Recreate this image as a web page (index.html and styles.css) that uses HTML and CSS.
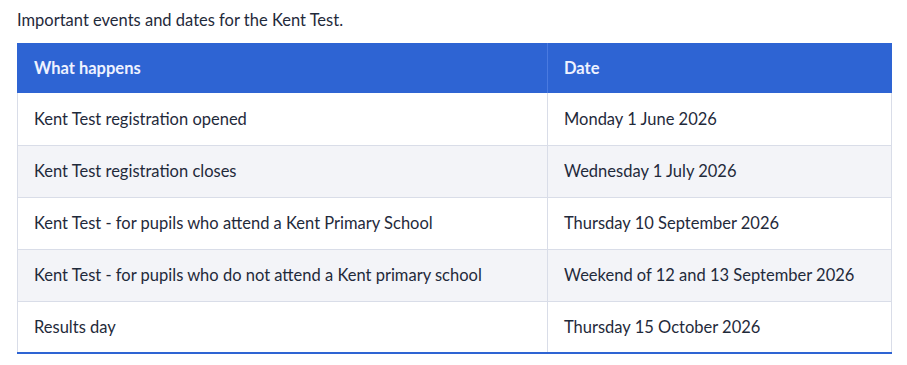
FILE: index.html
```html
<!DOCTYPE html>
<html lang="en">
<head>
<meta charset="utf-8">
<link rel="stylesheet" href="styles.css">
</head>
<body>
<p class="intro">Important events and dates for the Kent Test.</p>
<table class="events">
  <thead>
    <tr><th class="col-what">What happens</th><th>Date</th></tr>
  </thead>
  <tbody>
    <tr><td>Kent Test registration opened</td><td>Monday 1 June 2026</td></tr>
    <tr><td>Kent Test registration closes</td><td>Wednesday 1 July 2026</td></tr>
    <tr><td>Kent Test - for pupils who attend a Kent Primary School</td><td>Thursday 10 September 2026</td></tr>
    <tr><td>Kent Test - for pupils who do not attend a Kent primary school</td><td>Weekend of 12 and 13 September 2026</td></tr>
    <tr><td>Results day</td><td>Thursday 15 October 2026</td></tr>
  </tbody>
</table>
</body>
</html>
```
FILE: styles.css
```css
html, body { margin: 0; padding: 0; background: #fff; }
body {
  padding: 8px 16px 0 17px;
  font-family: Lato, "Open Sans", sans-serif;
  font-size: 16.5px;
  color: #1f2a3b;
}
.intro { margin: 0 0 11px 0; line-height: 24px; }
.events {
  width: 875px;
  border-collapse: collapse;
  border-bottom: 2px solid #2e64d3;
}
.events th {
  background: #2e64d3;
  color: #eef2ff;
  font-weight: 700;
  text-align: left;
  height: 50px;
  padding: 0 16px;
  box-sizing: border-box;
  border-left: 1px solid #4a7ae0;
}
.events th:first-child { border-left: 1px solid #2e64d3; }
.events th.col-what { width: 530px; }
.events td {
  height: 52px;
  padding: 0 16px;
  box-sizing: border-box;
  border: 1px solid #d9dde8;
  border-top: none;
}
.events tbody tr:nth-child(even) td { background: #f3f4f8; }
.events tbody tr:last-child td { border-bottom: 2px solid #2e64d3; }
```
